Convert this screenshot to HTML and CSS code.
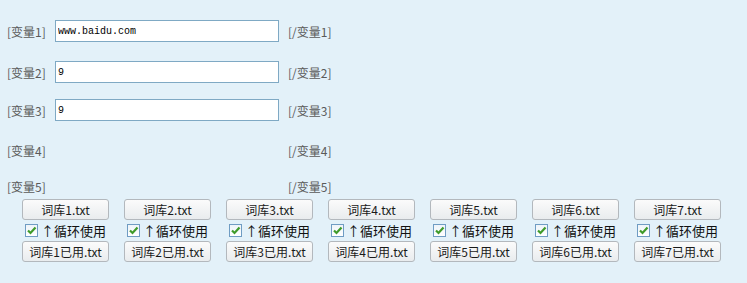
FILE: index.html
```html
<!DOCTYPE html>
<html lang="zh">
<head>
<meta charset="utf-8">
<link rel="stylesheet" href="styles.css">
</head>
<body>
<div class="page">
  <div class="vars">
    <div class="row r1"><span class="lbl">[变量1]</span><input class="field" value="www.baidu.com"><span class="end">[/变量1]</span></div>
    <div class="row r2"><span class="lbl">[变量2]</span><input class="field" value="9"><span class="end">[/变量2]</span></div>
    <div class="row r3"><span class="lbl">[变量3]</span><input class="field" value="9"><span class="end">[/变量3]</span></div>
    <div class="row r4"><span class="lbl">[变量4]</span><span class="blank"></span><span class="end">[/变量4]</span></div>
    <div class="row r5"><span class="lbl">[变量5]</span><span class="blank"></span><span class="end">[/变量5]</span></div>
  </div>
  <div class="libs">
    <div class="lib"><button class="btn">词库1.txt</button><label class="chk"><span class="box"><svg viewBox="0 0 11 11" width="11" height="11"><path d="M2 5.5 L4.5 8 L9.5 2.5" fill="none" stroke="#3f9b2a" stroke-width="2.2"/></svg></span>↑循环使用</label><button class="btn">词库1已用.txt</button></div>
    <div class="lib"><button class="btn">词库2.txt</button><label class="chk"><span class="box"><svg viewBox="0 0 11 11" width="11" height="11"><path d="M2 5.5 L4.5 8 L9.5 2.5" fill="none" stroke="#3f9b2a" stroke-width="2.2"/></svg></span>↑循环使用</label><button class="btn">词库2已用.txt</button></div>
    <div class="lib"><button class="btn">词库3.txt</button><label class="chk"><span class="box"><svg viewBox="0 0 11 11" width="11" height="11"><path d="M2 5.5 L4.5 8 L9.5 2.5" fill="none" stroke="#3f9b2a" stroke-width="2.2"/></svg></span>↑循环使用</label><button class="btn">词库3已用.txt</button></div>
    <div class="lib"><button class="btn">词库4.txt</button><label class="chk"><span class="box"><svg viewBox="0 0 11 11" width="11" height="11"><path d="M2 5.5 L4.5 8 L9.5 2.5" fill="none" stroke="#3f9b2a" stroke-width="2.2"/></svg></span>↑循环使用</label><button class="btn">词库4已用.txt</button></div>
    <div class="lib"><button class="btn">词库5.txt</button><label class="chk"><span class="box"><svg viewBox="0 0 11 11" width="11" height="11"><path d="M2 5.5 L4.5 8 L9.5 2.5" fill="none" stroke="#3f9b2a" stroke-width="2.2"/></svg></span>↑循环使用</label><button class="btn">词库5已用.txt</button></div>
    <div class="lib"><button class="btn">词库6.txt</button><label class="chk"><span class="box"><svg viewBox="0 0 11 11" width="11" height="11"><path d="M2 5.5 L4.5 8 L9.5 2.5" fill="none" stroke="#3f9b2a" stroke-width="2.2"/></svg></span>↑循环使用</label><button class="btn">词库6已用.txt</button></div>
    <div class="lib"><button class="btn">词库7.txt</button><label class="chk"><span class="box"><svg viewBox="0 0 11 11" width="11" height="11"><path d="M2 5.5 L4.5 8 L9.5 2.5" fill="none" stroke="#3f9b2a" stroke-width="2.2"/></svg></span>↑循环使用</label><button class="btn">词库7已用.txt</button></div>
  </div>
</div>
</body>
</html>
```

FILE: styles.css
```css
html, body {
  margin: 0;
  padding: 0;
  background: #e3f1f9;
}
body {
  font-family: "Noto Sans CJK SC", "Liberation Sans", sans-serif;
  font-size: 12px;
  color: #222;
  width: 747px;
  height: 283px;
  overflow: hidden;
}
.page {
  padding: 20px 0 0 7px;
}
.vars {
  display: flex;
  flex-direction: column;
}
.row {
  display: flex;
  align-items: center;
  height: 22px;
}
.r2 { margin-top: 19px; }
.r3 { margin-top: 16px; }
.r4 { margin-top: 18px; }
.r5 { margin-top: 14px; }
.lbl {
  width: 48px;
  color: #5a5a5a;
  white-space: nowrap;
}
.end {
  margin-left: 9px;
  color: #5a5a5a;
  white-space: nowrap;
}
.field {
  box-sizing: border-box;
  width: 224px;
  height: 22px;
  margin: 0;
  padding: 0 2px;
  border: 1px solid #7fa9c4;
  background: #fff;
  font-family: "Liberation Mono", monospace;
  font-size: 10px;
  color: #000;
  outline: none;
}
.blank {
  width: 224px;
}
.libs {
  display: flex;
  gap: 15px;
  margin-top: 2px;
  margin-left: 15px;
}
.lib {
  display: flex;
  flex-direction: column;
  align-items: center;
  width: 87px;
}
.btn {
  box-sizing: border-box;
  width: 87px;
  height: 21px;
  margin: 0;
  padding: 0;
  border: 1px solid #b3b8bd;
  border-radius: 3px;
  background: linear-gradient(#fbfbfb, #e9ecee);
  font-family: "Noto Sans CJK SC", "Liberation Sans", sans-serif;
  font-size: 12px;
  line-height: 19px;
  color: #1a1a1a;
  white-space: nowrap;
}
.chk {
  display: flex;
  align-items: center;
  gap: 3px;
  height: 21px;
  font-size: 13px;
  color: #111;
}
.box {
  box-sizing: border-box;
  width: 13px;
  height: 13px;
  border: 1px solid #6f9cc3;
  background: linear-gradient(#eef4f9, #ffffff);
  display: flex;
  align-items: center;
  justify-content: center;
}
.box svg { display: block; }
```
